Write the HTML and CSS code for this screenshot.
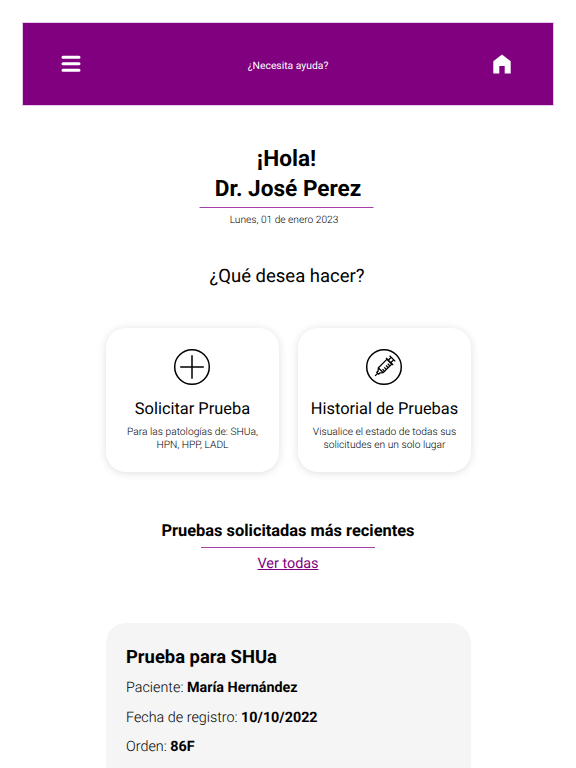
FILE: index.html
```
<!DOCTYPE html>
<html lang="es">
  <head>
    <meta charset="UTF-8" />
    <meta name="viewport" content="width=device-width, initial-scale=1.0" />
    <title>Inicio</title>
    <link rel="stylesheet" href="styles.css">
  </head>
  <body>
    <div class="app-container">
      <!-- Header -->
      <header class="header">
        <button class="icon-button" aria-label="Menu">
          <svg width="20" height="18" viewBox="0 0 20 18">
            <path d="M2 2.200H18M2 8.800H18M2 15.300H18" stroke="#fff" stroke-width="3" stroke-linecap="round" />
          </svg>
        </button>
        <a class="help-link" href="#">¿Necesita ayuda?</a>
        <button class="icon-button" aria-label="Inicio">
          <svg width="18" height="20" viewBox="0 0 18 20">
            <path d="M.3 7.200L9 .5l8.700 6.700v12.300h-6v-7.500H6.300v7.500h-6z" fill="#fff" />
          </svg>
        </button>
      </header>

      <!-- Greeting -->
      <section class="greeting">
        <h1><span>¡Hola!</span><br>Dr. José Perez</h1>
        <div class="divider"></div>
        <p class="date">Lunes, 01 de enero 2023</p>
      </section>

      <h2 class="question">¿Qué desea hacer?</h2>

      <!-- Options -->
      <div class="options">
        <a class="option-card" href="#">
          <svg class="option-icon" width="38" height="38" viewBox="0 0 38 38">
            <circle cx="19" cy="19" r="17.300" />
            <path d="M19 7.200v23.600M7.200 19h23.600" />
          </svg>
          <h3>Solicitar Prueba</h3>
          <p>Para las patologías de: SHUa, HPN, HPP, LADL</p>
        </a>
        <a class="option-card" href="#">
          <svg class="option-icon" width="38" height="38" viewBox="0 0 38 38">
            <circle cx="19" cy="19" r="17.300" />
            <g class="syringe" transform="translate(19.300 18.700) rotate(45)">
              <path d="M-3.400 -7V5L-1.300 7.500V9.300H1.300V7.500L3.400 5V-7z" />
              <path d="M0 9.300V13M-5 -7.500H5M-1.800 -8V-11.500M1.800 -8V-11.500M-4 -11.500H4" />
              <path d="M3.200 -4.500H.4M3.200 -2H.4M3.200 .5H.4M3.200 3H.4M-3.200 5H3.200" />
            </g>
          </svg>
          <h3>Historial de Pruebas</h3>
          <p>Visualice el estado de todas sus solicitudes en un solo lugar</p>
        </a>
      </div>

      <!-- Recent tests -->
      <section class="recent">
        <h2>Pruebas solicitadas más recientes</h2>
        <div class="divider"></div>
        <a class="see-all" href="#">Ver todas</a>
      </section>

      <article class="test-card">
        <h3>Prueba para SHUa</h3>
        <p>Paciente: <strong>María Hernández</strong></p>
        <p>Fecha de registro: <strong>10/10/2022</strong></p>
        <p>Orden: <strong>86F</strong></p>
      </article>
    </div>
  </body>
</html>
```
FILE: styles.css
```
* {
  margin: 0;
  padding: 0;
  box-sizing: border-box;
}

body {
  font-family: Roboto, "Liberation Sans", sans-serif;
  background: #fff;
  color: #000;
  text-rendering: geometricPrecision;
}

.app-container {
  height: 768px;
  padding: 23px 23px 0;
  overflow: hidden;
  display: flex;
  flex-direction: column;
}

/* Header */
.header {
  flex: none;
  height: 82px;
  padding: 0 42px 0 38px;
  display: flex;
  align-items: center;
  justify-content: space-between;
  background: #800080;
  box-shadow: 0 0 0 1px rgba(128, 0, 128, 0.2);
}

.icon-button {
  border: none;
  background: none;
  cursor: pointer;
}

.icon-button svg {
  display: block;
}

.help-link {
  padding: 2px 0 0 2px;
  color: #fff;
  font-size: 10.350px;
  text-decoration: none;
}

/* Greeting */
.greeting {
  margin-top: 39px;
  text-align: center;
}

.greeting h1 {
  font-size: 22.600px;
  line-height: 30px;
  font-weight: 700;
}

.greeting h1 span {
  padding-right: 3px;
}

.divider {
  width: 174px;
  height: 1px;
  margin: 3px auto 0;
  background: #a63fa6;
}

.greeting .divider {
  transform: translateX(-1.5px);
}

.date {
  margin-top: 6px;
  padding-right: 8px;
  font-size: 10.200px;
  line-height: 14px;
  font-weight: 300;
}

.question {
  margin-top: 36px;
  padding-right: 2px;
  font-size: 18.500px;
  line-height: 24px;
  font-weight: 400;
  text-align: center;
}

/* Options */
.options {
  display: flex;
  justify-content: center;
  gap: 19px;
  margin-top: 40px;
}

.option-card {
  width: 173px;
  height: 143.500px;
  padding: 20px 16px 0;
  border-radius: 20px;
  background: #fff;
  box-shadow: 0 1px 9px rgba(0, 0, 0, 0.13);
  color: #000;
  text-align: center;
  text-decoration: none;
}

.option-icon {
  display: block;
  margin: 0 auto;
  fill: none;
  stroke: #000;
  stroke-width: 1.500;
}

.syringe {
  stroke-width: 1.300;
}

.option-card h3 {
  margin: 13px -11px 0 -10px;
  font-size: 16.400px;
  line-height: 22px;
  font-weight: 400;
}

.option-card p {
  margin: 4px -5px 0 -4px;
  font-size: 10.250px;
  line-height: 13.400px;
  font-weight: 300;
}

/* Recent tests */
.recent {
  margin-top: 49px;
  text-align: center;
}

.recent h2 {
  font-size: 16.400px;
  line-height: 21px;
}

.recent .divider {
  margin-top: 5px;
}

.see-all {
  display: block;
  margin-top: 6px;
  color: #800080;
  font-size: 14.400px;
  line-height: 19px;
}

.test-card {
  flex: none;
  width: 365px;
  height: 145px;
  margin: 50.500px auto 0;
  padding: 22px 21px 0 20.500px;
  border-radius: 20px 20px 0 0;
  background: #f5f5f5;
}

.test-card h3 {
  font-size: 18.400px;
  line-height: 25px;
}

.test-card p {
  margin-top: 9.600px;
  font-size: 14.350px;
  line-height: 20px;
  font-weight: 300;
}

.test-card h3 + p {
  margin-top: 8px;
}

.test-card strong {
  font-weight: 700;
}
```
